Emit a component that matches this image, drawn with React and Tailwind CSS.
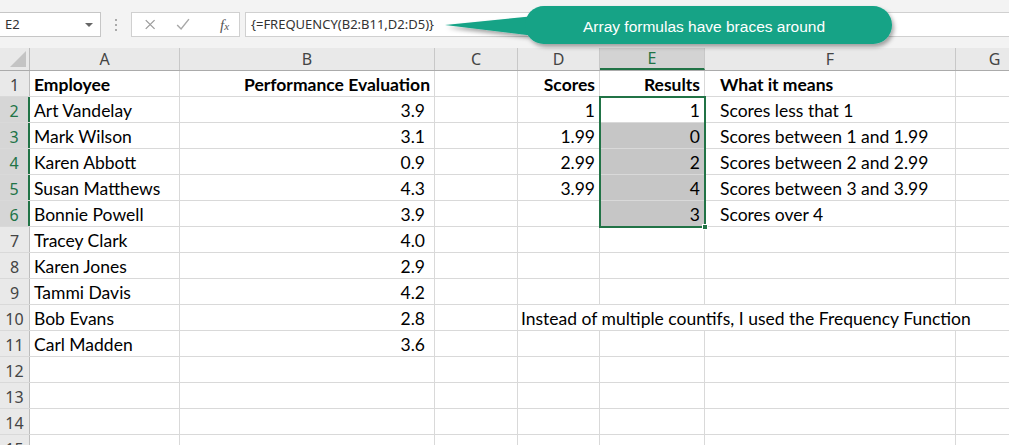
import React from "react";

const COLS = [
  { key: "A", w: "w-[150px]" },
  { key: "B", w: "w-[255px]" },
  { key: "C", w: "w-[83px]" },
  { key: "D", w: "w-[82px]" },
  { key: "E", w: "w-[105px]" },
  { key: "F", w: "w-[251px]" },
  { key: "G", w: "w-[78px]" },
  { key: "", w: "w-[60px]" },
];

const names = [
  "Art Vandelay",
  "Mark Wilson",
  "Karen Abbott",
  "Susan Matthews",
  "Bonnie Powell",
  "Tracey Clark",
  "Karen Jones",
  "Tammi Davis",
  "Bob Evans",
  "Carl Madden",
];
const evals = ["3.9", "3.1", "0.9", "4.3", "3.9", "4.0", "2.9", "4.2", "2.8", "3.6"];
const scores = ["1", "1.99", "2.99", "3.99"];
const results = ["1", "0", "2", "4", "3"];
const means = [
  "Scores less that 1",
  "Scores between 1 and 1.99",
  "Scores between 2 and 2.99",
  "Scores between 3 and 3.99",
  "Scores over 4",
];

function Cell({ w, children, align = "left", bold = false, bg = "", extra = "" }) {
  return (
    <div
      className={`${w} shrink-0 h-full flex items-center pt-[4px] border-r border-[#d9d9d9] ${
        align === "right" ? "justify-end pr-[4px]" : "justify-start pl-[4px]"
      } ${bold ? "font-bold" : ""} ${bg} ${extra} whitespace-nowrap`}
    >
      {children}
    </div>
  );
}

function RowHeader({ n, selected }) {
  return (
    <div
      className={`w-[30px] shrink-0 h-full flex items-center justify-center pt-[3px] border-r text-[16px] ${
        selected
          ? "bg-[#d6d6d6] text-[#217346] border-r-[2px] border-r-[#217346]"
          : "bg-[#e9e9e9] text-[#444] border-[#bdbdbd]"
      }`}
      style={{ fontFamily: "'Noto Sans', sans-serif" }}
    >
      {n}
    </div>
  );
}

function Tail() {
  return (
    <>
      <Cell w="w-[78px]" />
      <Cell w="w-[60px]" />
    </>
  );
}

function DataRow({ n }) {
  const i = n - 2;
  const sel = n >= 2 && n <= 6;
  const border = "h-[26px] flex border-b border-[#d9d9d9]";
  if (n === 1) {
    return (
      <div className={border}>
        <RowHeader n={1} />
        <Cell w="w-[150px]" bold>Employee</Cell>
        <Cell w="w-[255px]" bold align="right">Performance Evaluation</Cell>
        <Cell w="w-[83px]" />
        <Cell w="w-[82px]" bold align="right">Scores</Cell>
        <Cell w="w-[105px]" bold align="right">Results</Cell>
        <Cell w="w-[251px]" bold extra="pl-[15px]">What it means</Cell>
        <Tail />
      </div>
    );
  }
  if (n === 10) {
    return (
      <div className={border}>
        <RowHeader n={10} />
        <Cell w="w-[150px]">{names[i]}</Cell>
        <Cell w="w-[255px]" align="right" extra="pr-[9px]">{evals[i]}</Cell>
        <Cell w="w-[83px]" />
        <div className="w-[516px] shrink-0 h-full flex items-center pt-[4px] pl-[3px] whitespace-nowrap border-r border-[#d9d9d9]">
          Instead of multiple countifs, I used the Frequency Function
        </div>
        <Cell w="w-[60px]" />
      </div>
    );
  }
  return (
    <div className={border}>
      <RowHeader n={n} selected={sel} />
      <Cell w="w-[150px]">{names[i] || ""}</Cell>
      <Cell w="w-[255px]" align="right" extra="pr-[9px]">{evals[i] || ""}</Cell>
      <Cell w="w-[83px]" />
      <Cell w="w-[82px]" align="right">{scores[i] || ""}</Cell>
      <Cell w="w-[105px]" align="right" bg={n >= 3 && n <= 6 ? "bg-[#c6c6c6]" : ""}>
        {results[i] || ""}
      </Cell>
      <Cell w="w-[251px]" extra="pl-[15px]">{means[i] || ""}</Cell>
      <Tail />
    </div>
  );
}

export default function App() {
  const rows = Array.from({ length: 15 }, (_, k) => k + 1);
  return (
    <div
      className="relative w-[1009px] h-[445px] overflow-hidden bg-white text-[17.5px] text-black"
      style={{ fontFamily: "Lato, sans-serif" }}
    >
      {/* toolbar */}
      <div
        className="h-[48px] bg-[#f3f3f3] flex items-start pt-[12px] text-[13px] text-[#333]"
        style={{ fontFamily: "'Noto Sans', sans-serif" }}
      >
        <div className="w-[101px] h-[25px] bg-white border border-[#c6c6c6] border-l-0 flex items-center justify-between pl-[5px] pr-[7px] shrink-0">
          <span>E2</span>
          <span className="w-0 h-0 border-l-[4px] border-r-[4px] border-t-[4px] border-l-transparent border-r-transparent border-t-[#666]" />
        </div>
        <div className="w-[30px] h-[25px] flex flex-col items-center justify-center gap-[3px] shrink-0">
          <span className="w-[2px] h-[2px] bg-[#aaa]" />
          <span className="w-[2px] h-[2px] bg-[#aaa]" />
          <span className="w-[2px] h-[2px] bg-[#aaa]" />
        </div>
        <div className="relative w-[109px] h-[25px] bg-white border border-[#d0d0d0] flex items-center shrink-0">
          <svg width="109" height="23" viewBox="0 0 109 23">
            <path d="M14 7 L23 16 M23 7 L14 16" stroke="#9b9b9b" strokeWidth="1.3" fill="none" />
            <path d="M46 12 L50 16 L58 6" stroke="#a8a8a8" strokeWidth="1.5" fill="none" />
          </svg>
          <span
            className="absolute left-[88px] top-[1px] italic text-[#555] text-[15px]"
            style={{ fontFamily: "'Liberation Serif', serif" }}
          >
            f<span className="text-[11px]">x</span>
          </span>
        </div>
        <div className="w-[5px] shrink-0" />
        <div className="flex-1 h-[25px] bg-white border border-[#d0d0d0] border-r-0 flex items-center pl-[5px] text-[13px] text-[#333]">
          {"{=FREQUENCY(B2:B11,D2:D5)}"}
        </div>
      </div>

      {/* column headers */}
      <div
        className="h-[23px] flex bg-[#e9e9e9] border-b border-[#ababab] text-[16px] text-[#444]"
        style={{ fontFamily: "'Noto Sans', sans-serif" }}
      >
        <div className="w-[30px] shrink-0 h-full border-r border-[#bdbdbd] relative">
          <svg className="absolute right-[3px] bottom-[3px]" width="16" height="16" viewBox="0 0 16 16">
            <path d="M16 0 L16 16 L0 16 Z" fill="#c4c4c4" />
          </svg>
        </div>
        {COLS.map((c, idx) => (
          <div
            key={idx}
            className={`${c.w} shrink-0 h-full flex items-center justify-center border-r border-[#c8c8c8] ${
              c.key === "E" ? "bg-[#d3d3d3] text-[#217346] border-b-[2px] border-b-[#217346]" : ""
            }`}
          >
            {c.key}
          </div>
        ))}
      </div>

      {rows.map((n) => (
        <DataRow key={n} n={n} />
      ))}

      {/* selection */}
      <div className="absolute left-[599px] top-[96px] w-[107px] h-[132px] border-2 border-[#217346] pointer-events-none" />
      <div className="absolute left-[702px] top-[224px] w-[6px] h-[6px] bg-[#217346] border border-white" />

      {/* callout */}
      <svg className="absolute left-0 top-0" width="1009" height="60" viewBox="0 0 1009 60">
        <defs>
          <filter id="sh" x="-10%" y="-30%" width="120%" height="180%">
            <feDropShadow dx="2" dy="3" stdDeviation="2" floodColor="#000" floodOpacity="0.35" />
          </filter>
        </defs>
        <g filter="url(#sh)">
          <path d="M445 25 L535 16 L535 36 Z" fill="#13a386" />
          <rect x="525" y="6" width="367" height="38" rx="19" fill="#13a386" />
        </g>
      </svg>
      <div
        className="absolute left-[583px] top-[15px] text-white text-[15.5px] whitespace-nowrap"
        style={{ fontFamily: "'Liberation Sans', Arial, sans-serif" }}
      >
        Array formulas have braces around
      </div>
    </div>
  );
}
